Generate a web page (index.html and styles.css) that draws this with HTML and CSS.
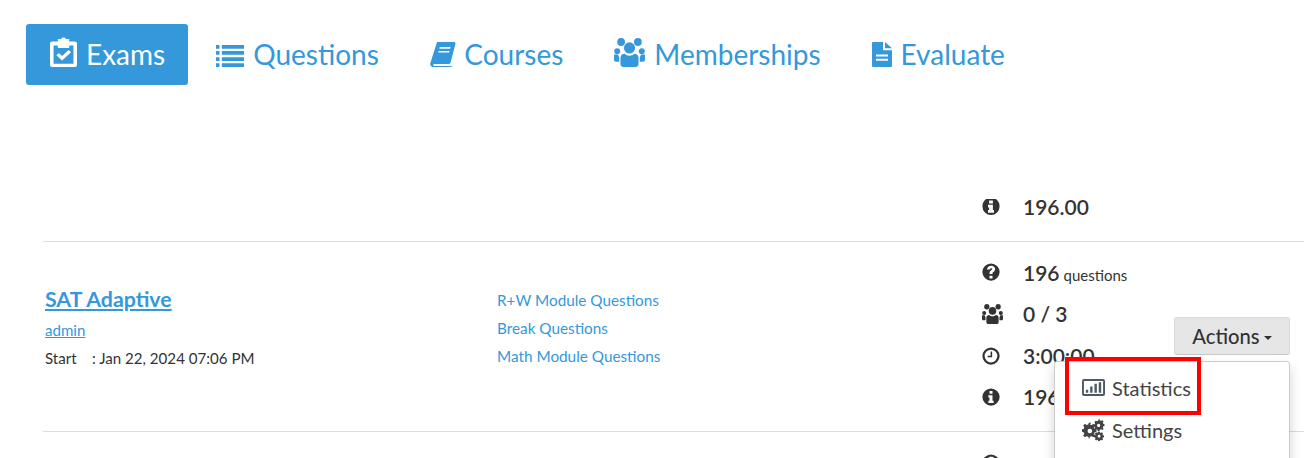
FILE: index.html
```html
<!DOCTYPE html>
<html lang="en">
<head>
    <meta charset="UTF-8">
    <meta name="viewport" content="width=device-width, initial-scale=1.0">
    <title>Exams</title>
    <link rel="stylesheet" href="styles.css">
</head>
<body>
    <svg class="icon-defs" aria-hidden="true">
        <symbol id="i-clipboard" viewBox="2.500 .5 19 23" preserveAspectRatio="none">
            <path fill-rule="evenodd" d="M8 2h2.200a2 2 0 0 1 3.600 0H16v2h4a1.500 1.500 0 0 1 1.500 1.500V22a1.500 1.500 0 0 1-1.500 1.500H4A1.500 1.500 0 0 1 2.500 22V5.500A1.500 1.500 0 0 1 4 4h4zM5 7v14h14V7h-3v2H8V7z"/>
            <path d="M7 14.500l1.700-1.700 2.300 2.300 4.600-4.700 1.700 1.700-6.300 6.400z"/>
        </symbol>
        <symbol id="i-list" viewBox="0 3.500 24 18" preserveAspectRatio="none">
            <path d="M0 3.500h3v3H0zM5 3.500h19v3H5zM0 8.500h3v3H0zM5 8.500h19v3H5zM0 13.500h3v3H0zM5 13.500h19v3H5zM0 18.500h3v3H0zM5 18.500h19v3H5z"/>
        </symbol>
        <symbol id="i-book" viewBox="0 1.500 24 22.500" preserveAspectRatio="none">
            <path fill-rule="evenodd" d="M6.500 1.500H22a1.500 1.500 0 0 1 1.400 2L19 20a1.500 1.500 0 0 1-1.400 1.200H4.500c-1 0-1.500.5-1.500 1s.5.800 1.300.800H20v1H3a2.800 2.800 0 0 1-2.800-3.200zM9 6l-.4 1.500h10L19 6zM8 9.500l-.4 1.500h10l.4-1.500z"/>
        </symbol>
        <symbol id="i-users" viewBox="0 1 24 22" preserveAspectRatio="none">
            <circle cx="5.500" cy="4" r="3"/><circle cx="18.500" cy="4" r="3"/><circle cx="12" cy="8.500" r="4.300"/>
            <circle cx="2.500" cy="11" r="2.300"/><circle cx="21.500" cy="11" r="2.300"/>
            <path d="M5 16c0-1.800 1.500-3 3.200-3 1 1 2.300 1.500 3.800 1.500s2.800-.5 3.800-1.500c1.700 0 3.200 1.200 3.200 3v5c0 1-1 2-2 2H7c-1 0-2-1-2-2z"/>
            <path d="M0 13.500h3l1 2v3.500H1.500c-.8 0-1.500-.7-1.500-1.500zM24 13.500h-3l-1 2v3.500h2.500c.8 0 1.500-.7 1.500-1.500z"/>
        </symbol>
        <symbol id="i-file" viewBox="2 0 20 24" preserveAspectRatio="none">
            <path fill-rule="evenodd" d="M3 0h10v8h9v15a1 1 0 0 1-1 1H3a1 1 0 0 1-1-1V1a1 1 0 0 1 1-1zM6 12v2h12v-2zM6 16v2h12v-2z"/>
            <path d="M15 0l7 6h-7z"/>
        </symbol>
        <symbol id="i-info" viewBox="0 0 24 24">
            <path fill-rule="evenodd" d="M12 .5a11.500 11.500 0 1 0 0 23 11.500 11.500 0 0 0 0-23zM10 4h4v3.500h-4zM8.500 9.500H14V17h1.500v3h-7v-3H10v-4.500H8.500z"/>
        </symbol>
        <symbol id="i-info-cut" viewBox="0 2.500 24 21" preserveAspectRatio="none">
            <path fill-rule="evenodd" d="M12 .5a11.500 11.500 0 1 0 0 23 11.500 11.500 0 0 0 0-23zM9.500 4.500h5v4h-5zM8 10h6.500v7H16v3.500H8V17h1.500v-3.500H8z"/>
        </symbol>
        <symbol id="i-question" viewBox="0 0 24 24">
            <path fill-rule="evenodd" d="M12 .5a11.500 11.500 0 1 0 0 23 11.500 11.500 0 0 0 0-23zM10 17h4v3.500h-4zM6.500 8.500C7 5.500 9.300 3.500 12.300 3.500c3 0 5.200 2 5.200 4.500 0 2-1 3-2.300 3.900-1 .7-1.200 1-1.200 2.600h-4c0-2.500.6-3.600 2.200-4.700 1-.7 1.300-1.100 1.300-1.700 0-.7-.6-1.200-1.300-1.200-.9 0-1.500.6-1.700 1.900z"/>
        </symbol>
        <symbol id="i-clock" viewBox="0 0 24 24">
            <path fill-rule="evenodd" d="M12 .5a11.500 11.500 0 1 0 0 23 11.500 11.500 0 0 0 0-23zM12 3.500a8.500 8.500 0 1 1 0 17 8.500 8.500 0 0 1 0-17z"/>
            <path d="M13.500 6v7.500H7.500v-2h4V6z"/>
        </symbol>
        <symbol id="i-chart" viewBox="0 3 24 18" preserveAspectRatio="none">
            <path fill-rule="evenodd" d="M2 3h20a2 2 0 0 1 2 2v14a2 2 0 0 1-2 2H2a2 2 0 0 1-2-2V5a2 2 0 0 1 2-2zM2 5v14h20V5z"/>
            <path d="M4 14.500h2.500v3H4zM8.500 11H11v6.500H8.500zM13 8h2.500v9.500H13zM17.500 6.500H20v11h-2.500z"/>
        </symbol>
        <symbol id="i-cogs" viewBox="0 0 24 24">
            <path fill-rule="evenodd" d="M8 6l2.300.5 1.500-1.300 2 2-1.200 1.600.6 2 2.100.4v2.800l-2.100.4-.6 2 1.200 1.600-2 2-1.500-1.300-2.300.6-.4 2H6.800l-.4-2-2.100-.6-1.600 1.300-2-2 1.200-1.600-.6-2-1.900-.4v-2.800l1.900-.4.6-2L.7 7.200l2-2 1.600 1.300 2.100-.5.400-2h2.800zM8 10.500a2.500 2.500 0 1 0 0 5 2.500 2.500 0 0 0 0-5z"/>
            <path fill-rule="evenodd" d="M18.500 0l.5 1.500 1.200.5 1.500-.7 1.300 1.400-.8 1.300.5 1.200 1.300.5v1.800l-1.300.5-.5 1.200.8 1.300-1.300 1.400-1.500-.7-1.200.5-.5 1.300h-1.800l-.5-1.300-1.200-.5-1.300.7L13 11l.7-1.300-.4-1.200-1.300-.5V6.200l1.300-.5.400-1.200L13 3.200l1.500-1.400 1.300.7 1.200-.5.500-1.500zm-.9 5.200a1.800 1.800 0 1 0 0 3.600 1.800 1.800 0 0 0 0-3.600z"/>
            <path fill-rule="evenodd" d="M19 14l.4 1.200 1-.1.800-.7 1.300 1.300-.7 1 .4 1 1.300.3v1.800l-1.300.3-.4 1 .7 1-1.300 1.300-1-.7-1 .4-.3 1.100h-1.800l-.3-1.100-1-.4-1 .7-1.300-1.300.7-1-.4-1-1.300-.3V18l1.300-.3.4-1-.7-1 1.300-1.300 1 .7 1-.4.300-1.200zm-.9 3.300a1.600 1.600 0 1 0 0 3.200 1.600 1.600 0 0 0 0-3.200z"/>
        </symbol>
    </svg>

    <nav class="nav">
        <a class="nav-link active" href="#"><svg class="nav-icon icon-clipboard"><use href="#i-clipboard"/></svg>Exams</a>
        <a class="nav-link" href="#"><svg class="nav-icon icon-list"><use href="#i-list"/></svg>Questions</a>
        <a class="nav-link" href="#"><svg class="nav-icon icon-book"><use href="#i-book"/></svg>Courses</a>
        <a class="nav-link" href="#"><svg class="nav-icon icon-users"><use href="#i-users"/></svg>Memberships</a>
        <a class="nav-link" href="#"><svg class="nav-icon icon-file"><use href="#i-file"/></svg>Evaluate</a>
    </nav>

    <div class="exam-list">
        <div class="exam exam-first">
            <div class="info"></div>
            <div class="sections"></div>
            <div class="stats">
                <div class="stat"><svg class="stat-icon icon-cut"><use href="#i-info-cut"/></svg><b>196.00</b></div>
            </div>
        </div>

        <div class="exam">
            <div class="info">
                <a class="title" href="#">SAT Adaptive</a>
                <a class="author" href="#">admin</a>
                <div class="start"><span class="start-label">Start</span>: Jan 22, 2024 07:06 PM</div>
            </div>
            <div class="sections">
                <a href="#">R+W Module Questions</a>
                <a href="#">Break Questions</a>
                <a href="#">Math Module Questions</a>
            </div>
            <div class="stats">
                <div class="stat"><svg class="stat-icon"><use href="#i-question"/></svg><b>196</b> <small>questions</small></div>
                <div class="stat"><svg class="stat-icon icon-people"><use href="#i-users"/></svg><b>0 / 3</b></div>
                <div class="stat"><svg class="stat-icon"><use href="#i-clock"/></svg><b>3:00:00</b></div>
                <div class="stat"><svg class="stat-icon"><use href="#i-info"/></svg><b>196.00</b></div>
            </div>
            <div class="actions">
                <button class="actions-btn">Actions<span class="caret"></span></button>
                <div class="menu">
                    <a class="menu-item" href="#"><svg class="menu-icon icon-chart"><use href="#i-chart"/></svg>Statistics</a>
                    <a class="menu-item" href="#"><svg class="menu-icon"><use href="#i-cogs"/></svg>Settings</a>
                </div>
                <div class="highlight"></div>
            </div>
        </div>

        <div class="exam">
            <div class="info"></div>
            <div class="sections"></div>
            <div class="stats">
                <div class="stat"><svg class="stat-icon"><use href="#i-question"/></svg></div>
            </div>
        </div>
    </div>
</body>
</html>
```

FILE: styles.css
```css
html, body {
    height: 100%;
}
body {
    margin: 0;
    overflow: hidden;
    background-color: #fff;
    color: #333;
    font-family: Lato, "Open Sans", sans-serif;
}
a {
    color: #3498db;
}
.icon-defs {
    display: none;
}
.nav {
    display: flex;
    padding: 24px 0 0 26px;
}
.nav-link {
    display: flex;
    align-items: center;
    height: 59px;
    padding: 0 23px 2px 24px;
    margin-right: 4px;
    border-radius: 3px;
    font-size: 28px;
    text-decoration: none;
}
.nav-link.active {
    background-color: #3498db;
    color: #fff;
}
.nav-icon {
    align-self: flex-end;
    margin-bottom: 16px;
    fill: currentColor;
}
.icon-clipboard {
    width: 27px;
    height: 30px;
    margin-right: 9px;
}
.icon-list {
    width: 28px;
    height: 22px;
    margin-right: 9px;
}
.icon-book {
    width: 26px;
    height: 25px;
    margin-right: 8.500px;
}
.icon-users {
    width: 31px;
    height: 29px;
    margin-right: 9px;
}
.icon-file {
    width: 20px;
    height: 25px;
    margin-right: 9px;
}
.exam-list {
    padding: 101px 0 0 43px;
}
.exam {
    position: relative;
    display: grid;
    grid-template-columns: 454px 485px 1fr;
    align-items: center;
    padding: 10px 0 13px;
    border-bottom: 1px solid #ddd;
}
.exam-first {
    padding: 0 0 13px;
}
.info {
    padding: 0 0 13px 2px;
    font-size: 15.100px;
}
.title {
    display: block;
    margin-bottom: 3px;
    font-size: 21.300px;
    font-weight: 700;
    line-height: 28px;
}
.author {
    display: block;
    line-height: 28px;
}
.start {
    line-height: 28px;
}
.start-label {
    display: inline-block;
    width: 47px;
}
.sections {
    display: flex;
    flex-direction: column;
    padding-bottom: 14px;
    font-size: 15.300px;
    line-height: 28px;
}
.sections a {
    text-decoration: none;
}
.stat {
    display: flex;
    align-items: baseline;
    height: 41.600px;
    line-height: 41.600px;
    font-size: 21px;
}
.stat b {
    font-weight: 600;
}
.stat small {
    margin-left: 4px;
    font-size: 15px;
}
.stat-icon {
    flex: none;
    align-self: center;
    width: 18px;
    height: 18px;
    margin-right: 23px;
    fill: currentColor;
}
.stat-icon.icon-cut {
    height: 16px;
}
.stat-icon.icon-people {
    width: 21px;
    height: 20px;
    margin-right: 20px;
}
.actions {
    position: absolute;
    top: 75px;
    right: 14px;
}
.actions-btn {
    display: block;
    width: 116px;
    height: 38px;
    margin-left: auto;
    border: 1px solid #dadada;
    border-bottom-color: #c6c6c6;
    border-radius: 3px;
    background-color: #e6e6e6;
    color: #333;
    font-family: inherit;
    font-size: 20.200px;
    font-weight: 500;
}
.caret {
    display: inline-block;
    margin-left: 4px;
    vertical-align: middle;
    border-top: 4px solid #333;
    border-left: 4.500px solid transparent;
    border-right: 4.500px solid transparent;
}
.menu {
    position: absolute;
    top: 44px;
    right: 0;
    width: 234px;
    height: 200px;
    padding-top: 5px;
    border: 1px solid #ccc;
    border-radius: 3px;
    background-color: #fff;
    box-shadow: 0 6px 12px rgba(0, 0, 0, 0.175);
}
.menu-item {
    display: flex;
    align-items: center;
    height: 42px;
    padding-left: 27px;
    color: #444;
    font-size: 20px;
    text-decoration: none;
}
.menu-icon {
    width: 23px;
    height: 22px;
    margin-right: 7px;
    fill: currentColor;
}
.menu-icon.icon-chart {
    height: 17px;
    color: #4d5a66;
}
.highlight {
    position: absolute;
    top: 40px;
    right: 89px;
    width: 128px;
    height: 50px;
    border: 4px solid #f00;
}
```
